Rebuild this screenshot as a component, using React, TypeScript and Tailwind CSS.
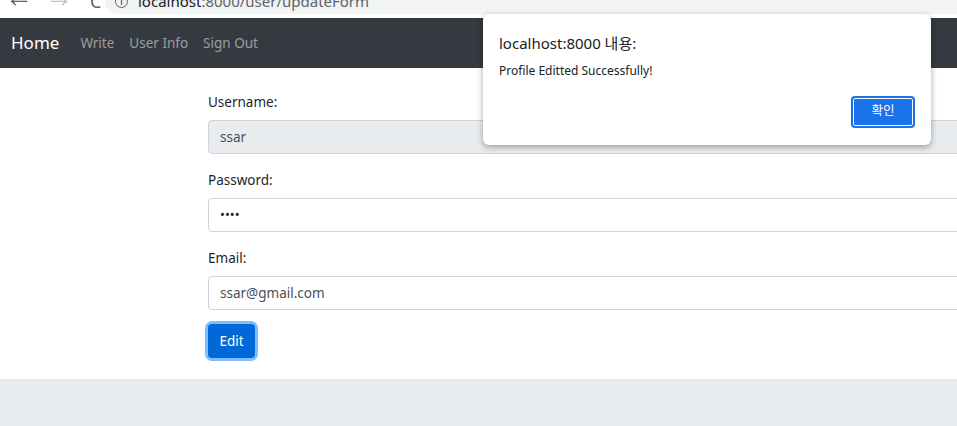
function App() {
  return (
    <div className="relative min-h-screen w-[957px] overflow-hidden bg-[#e9ecef] font-['Noto_Sans','Noto_Sans_CJK_KR',sans-serif]">

      {/* browser chrome, cut off at the top */}
      <div className="h-[18px] overflow-hidden bg-white">
        <div className="-mt-[12px] flex h-[26px] items-center">
          <div className="flex w-[105px] items-center gap-[22px] pl-[10px] text-[18px] text-[#5f6368]">
            <span>←</span>
            <span className="text-[#bdc1c6]">→</span>
            <span>C</span>
          </div>
          <div className="flex h-[26px] flex-1 items-center gap-[10px] rounded-l-full bg-[#f1f3f4] pl-[10px] text-[15px] text-[#202124]">
            <span className="flex h-[13px] w-[13px] items-center justify-center rounded-full border border-[#5f6368] text-[9px] leading-none">i</span>
            <span>
              localhost<span className="text-[#5f6368]">:8000/user/updateForm</span>
            </span>
          </div>
        </div>
      </div>

      {/* navbar */}
      <nav className="flex h-[50px] items-center bg-[#343a40] px-[11px]">
        <span className="mr-[21px] text-[17px] text-white">Home</span>
        <div className="flex gap-[15px] text-[13.5px] text-white/50">
          <span>Write</span>
          <span>User Info</span>
          <span>Sign Out</span>
        </div>
      </nav>

      {/* form */}
      <main className="bg-white pb-[21px] pl-[208px] pt-[24px] text-[13.5px] text-[#212529]">
        <div className="mb-[16px]">
          <label className="mb-[8px] block leading-[20px]">Username:</label>
          <div className="flex h-[34px] w-[760px] items-center rounded-[4px] border border-[#ced4da] bg-[#e9ecef] px-[11px] text-[#495057]">
            ssar
          </div>
        </div>
        <div className="mb-[16px]">
          <label className="mb-[8px] block leading-[20px]">Password:</label>
          <div className="flex h-[34px] w-[760px] items-center rounded-[4px] border border-[#ced4da] bg-white px-[11px] text-[#495057]">
            <span className="text-[13px] text-[#212529]">••••</span>
          </div>
        </div>
        <div className="mb-[14px]">
          <label className="mb-[8px] block leading-[20px]">Email:</label>
          <div className="flex h-[34px] w-[760px] items-center rounded-[4px] border border-[#ced4da] bg-white px-[11px] text-[#495057]">
            ssar@gmail.com
          </div>
        </div>
        <button className="h-[34px] w-[47px] rounded-[4px] bg-[#0069d9] text-white ring-[3px] ring-[#80bdff]">
          Edit
        </button>
      </main>

      {/* alert dialog */}
      <div className="absolute left-[483px] top-[14px] h-[131px] w-[448px] rounded-[6px] bg-white px-[16px] pt-[18px] shadow-[0_2px_6px_rgba(0,0,0,0.35)]">
        <p className="text-[15px] text-[#202124]">localhost:8000 내용:</p>
        <p className="mt-[7px] text-[12px] text-[#202124]">Profile Editted Successfully!</p>
        <div className="mt-[16px] flex justify-end">
          <button className="h-[32px] w-[64px] rounded-[4px] border-2 border-[#1a73e8] bg-[#1a73e8] text-[12.5px] text-white shadow-[inset_0_0_0_1px_#fff]">
            확인
          </button>
        </div>
      </div>

    </div>
  );
}

export default App;
